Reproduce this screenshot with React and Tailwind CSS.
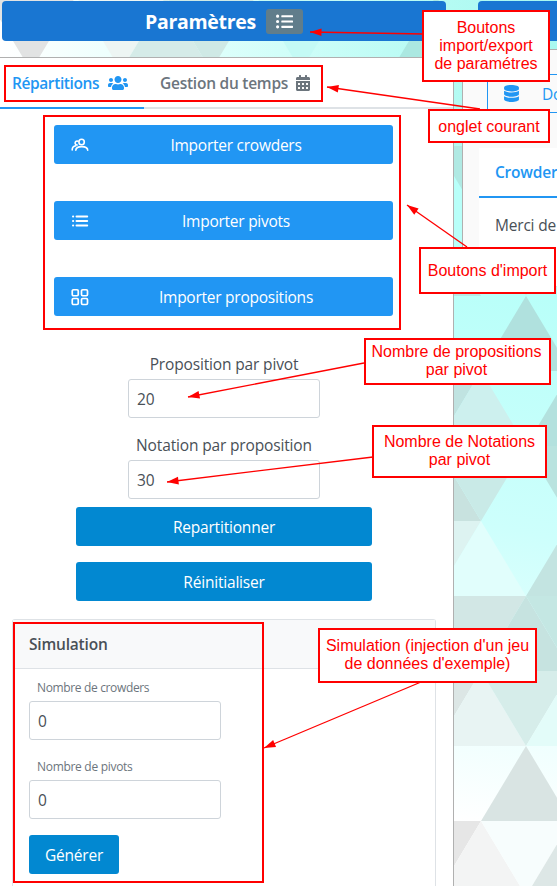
import React from "react";
import { FaUsers, FaCalendarAlt, FaListUl, FaDatabase } from "react-icons/fa";

// Shaded facets of the page wallpaper: points, colour.
const facets = [
  ["-14,-4 76,-4 31,71", "#e2e3e3"],
  ["76,-4 166,-4 121,71", "#edf5f3"],
  ["166,-4 211,71 121,71", "#d5ebe8"],
  ["166,-4 256,-4 211,71", "#cfe9e5"],
  ["256,-4 346,-4 301,71", "#c4faf5"],
  ["436,-4 481,71 391,71", "#abe8e1"],
  ["436,146 526,146 481,221", "#b0e9e3"],
  ["436,221 481,296 391,296", "#b5e8e4"],
  ["481,221 571,221 526,296", "#b5f7f0"],
  ["526,296 571,371 481,371", "#b0e1de"],
  ["391,371 481,371 436,446", "#c0e3e1"],
  ["481,371 526,446 436,446", "#cdf0ee"],
  ["571,371 616,446 526,446", "#b3e1de"],
  ["436,446 481,521 391,521", "#c8e2df"],
  ["436,446 526,446 481,521", "#c9eae7"],
  ["526,446 616,446 571,521", "#b9e3df"],
  ["391,521 481,521 436,596", "#ddf3f1"],
  ["481,521 526,596 436,596", "#e1fefc"],
  ["571,521 616,596 526,596", "#c3e4e1"],
  ["436,596 481,671 391,671", "#d9e5e4"],
  ["436,596 526,596 481,671", "#d2e7e5"],
  ["526,596 571,671 481,671", "#c6e3e0"],
  ["526,596 616,596 571,671", "#c4e7e3"],
  ["391,671 481,671 436,746", "#dce6e5"],
  ["481,671 526,746 436,746", "#e8f4f3"],
  ["481,671 571,671 526,746", "#d6edea"],
  ["571,671 616,746 526,746", "#e3fcf9"],
  ["526,746 571,821 481,821", "#d9e4e3"],
  ["391,821 481,821 436,896", "#e6e6e6"],
  ["481,821 526,896 436,896", "#f3f4f4"],
  ["481,821 571,821 526,896", "#f7fdfd"],
  ["571,821 616,896 526,896", "#dde7e6"],
];

function Wallpaper() {
  return (
    <svg className="absolute inset-0" width="557" height="886">
      <defs>
        <linearGradient id="top" x1="0" x2="1" y1="0" y2="0">
          <stop offset="0" stopColor="#ffffff" />
          <stop offset="0.4" stopColor="#dcfffb" />
          <stop offset="0.8" stopColor="#b4fbf3" />
          <stop offset="1" stopColor="#a8f8f0" />
        </linearGradient>
        <linearGradient id="side" gradientUnits="userSpaceOnUse" x1="557" y1="290" x2="454" y2="821">
          <stop offset="0" stopColor="#b8fff9" />
          <stop offset="0.45" stopColor="#cdfffc" />
          <stop offset="1" stopColor="#ffffff" />
        </linearGradient>
      </defs>
      <rect width="557" height="146" fill="url(#top)" />
      <rect y="146" width="557" height="740" fill="url(#side)" />
      {facets.map(([points, fill]) => (
        <polygon key={points} points={points} fill={fill} />
      ))}
    </svg>
  );
}

const UsersIcon = () => (
  <svg width="18" height="14" viewBox="0 0 18 14" fill="none" stroke="currentColor" strokeWidth="1.6" strokeLinecap="round">
    <circle cx="10.6" cy="4" r="2.7" />
    <path d="M7 3.200A2 2 0 1 0 6.200 7" />
    <path d="M4.800 12.300c0-2.500 2.400-3.700 6-3.700s5.900 1.200 5.900 3.700" />
    <path d="M1.200 12c0-2.300 1.200-3.800 3.600-4.200" />
  </svg>
);
const ListIcon = () => (
  <svg width="18" height="14" viewBox="0 0 18 14" fill="none" stroke="currentColor" strokeWidth="2" strokeLinecap="round">
    <path d="M2 2.500h.2M5.500 2.500h10.700M2 7h.2M5.500 7h10.700M2 11.500h.2M5.500 11.500h10.700" />
  </svg>
);
const GridIcon = () => (
  <svg width="18" height="18" viewBox="0 0 18 18" fill="none" stroke="currentColor" strokeWidth="1.700">
    <rect x="1.250" y="1.750" width="6" height="6" rx="1.200" />
    <rect x="10.500" y="1.750" width="6" height="6" rx="1.200" />
    <rect x="1.250" y="10.500" width="6" height="6" rx="1.200" />
    <rect x="10.500" y="10.500" width="6" height="6" rx="1.200" />
  </svg>
);

function ImportButton({ icon, children }) {
  return (
    <button className="flex h-[39px] w-[339px] items-center rounded-[3px] bg-[#2196f3] pl-[17px] tracking-[-0.25px] text-white">
      <span className="flex w-[18px] justify-center">{icon}</span>
      <span className="flex-1 pr-[10px] text-center">{children}</span>
    </button>
  );
}

function Field({ value }) {
  return (
    <div className="flex h-[39px] w-[192px] items-center rounded-[3px] border border-[#ced4da] bg-white pl-2 text-[#495057]">
      {value}
    </div>
  );
}

function Note({ className, lines }) {
  return (
    <div className={"absolute flex flex-col items-center border-2 border-[#ff0000] bg-white font-['Liberation_Sans',Arial,sans-serif] text-base leading-[18px] tracking-normal whitespace-nowrap text-[#ff0000] " + className}>
      {lines.map((line) => (
        <span key={line}>{line}</span>
      ))}
    </div>
  );
}

// Arrow from (x1, y1) with its head's tip at (x2, y2).
function Arrow({ x1, y1, x2, y2 }) {
  const angle = (Math.atan2(y2 - y1, x2 - x1) * 180) / Math.PI;
  return (
    <g stroke="#ff0000" fill="#ff0000">
      <line x1={x1} y1={y1} x2={x2} y2={y2} strokeWidth="1.300" />
      <polygon points="0,0 -11.500,-3.800 -11.500,3.800" stroke="none" transform={`translate(${x2} ${y2}) rotate(${angle})`} />
    </g>
  );
}

export default function App() {
  return (
    <div className="relative h-[886px] w-[557px] overflow-hidden bg-white font-['Open_Sans','Noto_Sans',sans-serif] text-[15.5px] leading-6 tracking-[-0.2px] text-[#495057]">
      <Wallpaper />
      <div className="relative flex h-full">
        <div className="flex w-[454px] shrink-0 flex-col pt-px">
          <div className="ml-[2px] flex h-10 w-[444px] shrink-0 items-center justify-center gap-[10px] rounded-[4px] bg-[#1976d2]">
            <span className="pt-[2px] text-[19.5px] font-bold tracking-[-0.3px] text-white">Paramètres</span>
            <span className="flex h-[25px] w-[37px] items-center justify-center rounded-[3px] bg-[#607d8b] text-white">
              <FaListUl size={17} />
            </span>
          </div>
          <div className="mt-4 flex flex-1 flex-col border-t border-r border-[#b0b0b0] bg-white">
            <div className="flex h-[51px] shrink-0 border-b-2 border-[#dee2e6] font-semibold">
              <div className="-mb-[2px] flex w-36 items-center gap-2 border-b-2 border-[#2196f3] pl-3 text-[#2196f3]">
                <span className="w-[88px] tracking-[-0.4px] whitespace-nowrap">Répartitions</span>
                <FaUsers size={20} />
              </div>
              <div className="flex items-center pl-4 text-[#6c757d]">
                <span className="w-[135px] tracking-[-0.25px] whitespace-nowrap">Gestion du temps</span>
                <FaCalendarAlt size={16} />
              </div>
            </div>
            <div className="mt-4 ml-[54px] flex flex-col gap-[37px]">
              <ImportButton icon={<UsersIcon />}>Importer crowders</ImportButton>
              <ImportButton icon={<ListIcon />}>Importer pivots</ImportButton>
              <ImportButton icon={<GridIcon />}>Importer propositions</ImportButton>
            </div>
            <div className="mt-9 ml-32 flex w-[192px] flex-col items-center">
              <span className="mb-[3px] tracking-[-0.15px]">Proposition par pivot</span>
              <Field value="20" />
              <span className="mt-[15px] mb-[3px] tracking-[-0.15px]">Notation par proposition</span>
              <Field value="30" />
            </div>
            <div className="mt-2 ml-[76px] flex w-[296px] flex-col gap-4 text-white">
              <button className="h-[39px] rounded-[3px] bg-[#0288d1]">Repartitionner</button>
              <button className="h-[39px] rounded-[3px] bg-[#0288d1]">Réinitialiser</button>
            </div>
            <div className="mt-[18px] ml-3 flex w-[424px] flex-1 flex-col rounded-t-[3px] border border-b-0 border-[#dee2e6]">
              <div className="flex h-[49px] shrink-0 items-center border-b border-[#dee2e6] bg-[#f8f9fa] pl-4 font-semibold">
                Simulation
              </div>
              <div className="flex flex-col items-start pt-[11px] pl-4">
                <span className="mb-[5px] ml-2 text-xs tracking-[-0.35px] text-[#6c757d]">Nombre de crowders</span>
                <Field value="0" />
                <span className="mt-[19px] mb-[5px] ml-2 text-xs tracking-[-0.3px] text-[#6c757d]">Nombre de pivots</span>
                <Field value="0" />
                <button className="mt-4 h-[39px] w-[90px] rounded-[3px] bg-[#0288d1] text-white">Générer</button>
              </div>
            </div>
          </div>
        </div>
        <div className="ml-2 flex w-[120px] shrink-0 flex-col pt-px">
          <div className="ml-4 h-10 shrink-0 rounded-[4px] bg-[#1976d2]" />
          <div className="mt-2 flex h-[238px] flex-col border border-[#b0b0b0] border-b-[#d0e8e6] bg-[#fafafa] pl-4">
            <div className="mt-6 ml-2 flex h-[39px] w-36 shrink-0 items-center rounded-[3px] border border-[#2196f3] pl-[15px] text-[#2196f3]">
              <FaDatabase size={17} />
              <span className="ml-[22px]">Données</span>
            </div>
            <div className="mt-[35px] flex flex-1 flex-col overflow-hidden bg-white pl-4 whitespace-nowrap">
              <div className="-ml-4 flex h-[50px] shrink-0 items-center border-b-2 border-[#2196f3] pl-4 font-semibold text-[#2196f3]">
                Crowders
              </div>
              <span className="mt-[15px]">Merci de</span>
            </div>
          </div>
        </div>
      </div>

      <svg className="absolute inset-0" width="557" height="886">
        <Arrow x1={424} y1={34} x2={310} y2={32} />
        <Arrow x1={480} y1={109} x2={327} y2={87} />
        <Arrow x1={467} y1={247} x2={407} y2={205} />
        <Arrow x1={364} y1={363} x2={188} y2={397} />
        <Arrow x1={373} y1={457} x2={167} y2={482} />
        <Arrow x1={421} y1={682} x2={264} y2={748} />
      </svg>
      <div className="absolute top-[65px] left-1 h-[37px] w-[319px] border-2 border-[#ff0000]" />
      <div className="absolute top-[115px] left-[43px] h-[215px] w-[358px] border-2 border-[#ff0000]" />
      <div className="absolute top-[622px] left-[13px] h-[261px] w-[251px] border-2 border-[#ff0000]" />
      <Note className="top-[10px] left-[422px] h-[72px] w-[128px] pt-[7px]" lines={["Boutons", "import/export", "de paramétres"]} />
      <Note className="top-[109px] left-[428px] h-[34px] w-[122px] pt-[7px]" lines={["onglet courant"]} />
      <Note className="top-[247px] left-[419px] h-[47px] w-[137px] pt-[13px]" lines={["Boutons d'import"]} />
      <Note className="top-[338px] left-[364px] h-[47px] w-[187px] pt-[3px] pr-[2px]" lines={["Nombre de propositions", "par pivot"]} />
      <Note className="top-[425px] left-[372px] h-[53px] w-[175px] pt-[6px]" lines={["Nombre de Notations", "par pivot"]} />
      <Note className="top-[628px] left-[318px] h-[55px] w-[219px] pt-[7px]" lines={["Simulation (injection d'un jeu", "de données d'exemple)"]} />
    </div>
  );
}
